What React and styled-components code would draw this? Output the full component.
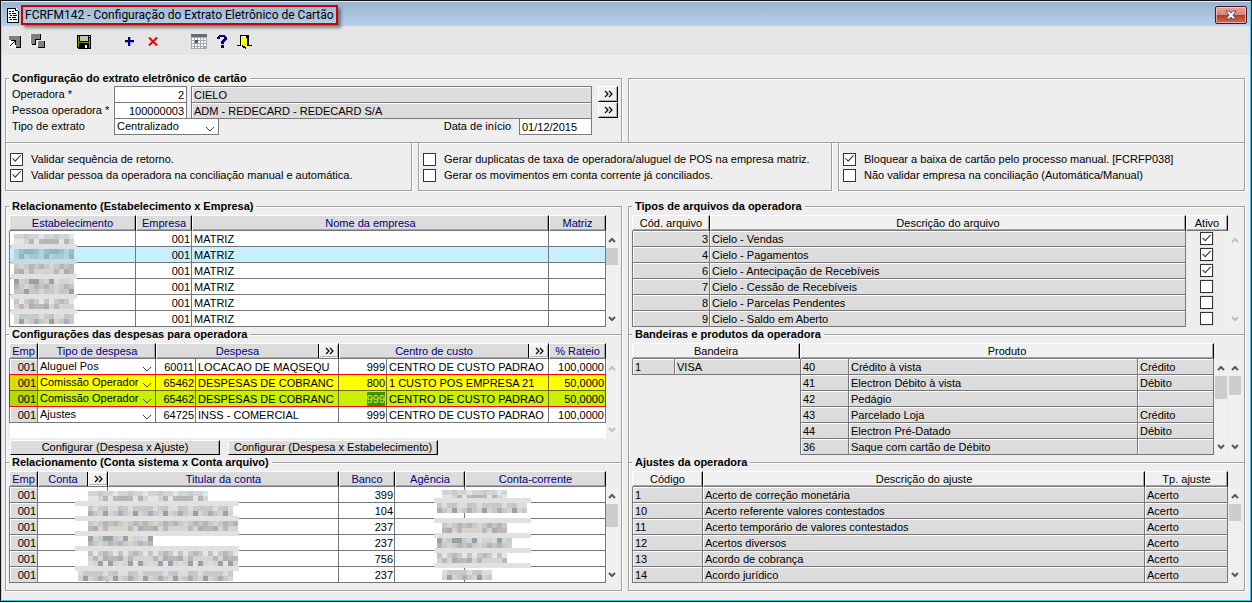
import styled, { createGlobalStyle, css } from "styled-components"

const GlobalStyle = createGlobalStyle`
    *, *::before, *::after {
        box-sizing: border-box;
    }
    body {
        margin: 0;
        background: #ffffff;
        color: #000000;
        font: 11px/15px "Liberation Sans", Arial, sans-serif;
    }
    button, input, select {
        margin: 0;
        padding: 0;
        color: inherit;
        font: inherit;
    }
`

const Window = styled.main`
    background: #eeeeee;
    border: solid #101018;
    border-width: 1px;
    box-shadow: inset 1px 0 0 #b9d1ea, inset -1px -1px 0 #35c8e8;
    padding: 0 1px 1px;
`
const TitleBar = styled.header`
    display: flex;
    align-items: center;
    gap: 1px;
    height: 25px;
    padding: 2px 3px 0 5px;
    border-top: 1px solid #e8f0f8;
    background: linear-gradient(#9ab3d1, #b7d0ea);
`
const Title = styled.h1`
    margin: 0;
    padding: 0 2px;
    border: 2px solid #cc0000;
    box-shadow: 3px 3px 3px rgba(0, 0, 0, 0.4);
    font: 12px/16px Roboto, "Open Sans", sans-serif;
    white-space: nowrap;
`
const CloseButton = styled.button`
    display: flex;
    align-items: center;
    justify-content: center;
    width: 32px;
    height: 18px;
    margin-left: auto;
    border: 1px solid #4a1420;
    border-radius: 2px;
    background: linear-gradient(#e8a79c, #d98477 48%, #b83a22 50%, #cf6a50);
    box-shadow: inset 0 0 0 1px rgba(255, 220, 210, 0.6);
`
const Toolbar = styled.nav`
    display: flex;
    gap: 23px;
    height: 29px;
    padding: 4px 1px;
    background: #e5e5e5;
`
const ToolGroup = styled.div`
    display: flex;
`
const ToolButton = styled.button`
    display: flex;
    align-items: center;
    justify-content: center;
    width: 23px;
    height: 23px;
    border: 0;
    background: none;
`
const Content = styled.div`
    padding: 17px 5px 9px 3px;
`
const Columns = styled.div`
    display: grid;
    grid-template-columns: repeat(2, minmax(0, 1fr));
    gap: 6px;
`
const CheckColumns = styled.div`
    display: grid;
    grid-template-columns: 407fr 414fr 407fr;
    gap: 6px;
    margin: -1px 0 9px;
`
const Stack = styled.div`
    min-width: 0;
`
const Group = styled.fieldset`
    min-width: 0;
    margin: 0;
    padding: 2px 3px 7px;
    border: 1px solid #a0a0a0;
    box-shadow: 1px 1px 0 #ffffff, inset 1px 1px 0 #ffffff;

    ${Stack} > &:not(:last-child) {
        margin-bottom: -6px;
        border-bottom: 0;
        box-shadow: 1px 0 0 #ffffff, inset 1px 1px 0 #ffffff;
    }
`
const Legend = styled.legend`
    padding: 0 3px;
    background: #eeeeee;
    font-weight: bold;
    line-height: 13px;
`
const HeadGroup = styled(Group)`
    padding-top: 1px;
    padding-bottom: 8px;
`
const BlankGroup = styled(Group)`
    margin-top: 6px;
`
const CheckGroup = styled(Group)`
    padding: 8px 4px 7px;
`
const Field = styled.div`
    display: flex;
    align-items: flex-start;
    height: 16px;
`
const FieldLabel = styled.label`
    width: ${(p) => (p.$inline ? "auto" : "105px")};
    margin-left: ${(p) => (p.$inline ? "auto" : "0")};
    padding: 0 ${(p) => (p.$inline ? "8px" : "0")} 0 3px;
    line-height: 16px;
`
const TextInput = styled.input`
    flex: ${(p) => (p.$grow ? "1" : "none")};
    min-width: 0;
    width: 73px;
    height: 17px;
    padding: 1px 2px 0;
    border: 1px solid #7a7a7a;
    border-radius: 0;
    background: ${(p) => (p.readOnly ? "#dcdcdc" : "#ffffff")};
    box-shadow: ${(p) => (p.readOnly ? "inset 1px 1px 0 #ffffff" : "none")};
    text-align: ${(p) => p.$align || "left"};
    margin-right: ${(p) => p.$gap || 0}px;
`
const SelectBox = styled.span`
    position: relative;
    display: flex;
    width: ${(p) => (p.$framed ? "105px" : "100%")};
    height: ${(p) => (p.$framed ? "17px" : "15px")};
    border: ${(p) => (p.$framed ? "1px solid #7a7a7a" : "0")};
    background: ${(p) => (p.$framed ? "#ffffff" : "none")};

    select {
        flex: 1;
        min-width: 0;
        padding: 0 14px 2px 2px;
        border: 0;
        appearance: none;
        background: none;
    }
    svg {
        position: absolute;
        right: 3px;
        bottom: 2px;
        pointer-events: none;
    }
`
const MoreButton = styled.button`
    display: flex;
    flex: none;
    align-items: center;
    justify-content: center;
    width: 20px;
    height: ${(p) => (p.$inHead ? "15px" : "16px")};
    border: solid;
    border-width: 1px;
    border-color: #ffffff #000000 ${(p) => (p.$inHead ? "#f0f0f0" : "#000000")} #ffffff;
    background: #f0f0f0;
    box-shadow: inset -1px -1px 0 #b4b4b4;
`
const CheckLabel = styled.label`
    display: flex;
    align-items: center;
    gap: 8px;
    height: 16px;
    white-space: nowrap;
`
const Checkbox = styled.input`
    display: block;
    flex: none;
    width: 13px;
    height: 13px;
    border: 1px solid #333333;
    border-radius: 0;
    appearance: none;
    background: #ffffff;

    &:checked::after {
        content: "";
        display: block;
        height: 11px;
        background: #3c3c3c;
        clip-path: polygon(9% 46%, 16% 40%, 38% 62%, 84% 14%, 91% 21%, 38% 78%);
    }
`
const GridBox = styled.div`
    position: relative;
    display: flex;
`
const Table = styled.table`
    flex: 1;
    align-self: flex-start;
    width: 0;
    min-width: 0;
    border-spacing: 0;
    table-layout: fixed;
    color: #000000;
`
const Col = styled.col`
    width: ${(p) => (p.$w ? p.$w + "px" : "auto")};
`
const Th = styled.th`
    height: 16px;
    padding: 0;
    border: solid;
    border-width: 1px;
    border-color: #ffffff #000000 #777777 #ffffff;
    background: ${(p) => (p.$light ? "#f0f0f0" : "#dcdcdc")};
    box-shadow: inset -1px -1px 0 #a6a6a6;
    color: ${(p) => (p.$light ? "#000000" : "#000080")};
    font-weight: normal;
    line-height: 14px;
    white-space: nowrap;
`
const HeadSplit = styled.span`
    display: flex;
    height: 14px;

    span {
        flex: 1;
        border-right: 1px solid #000000;
    }
    ${MoreButton} {
        height: 14px;
        border-right: 0;
        width: 19px;
    }
`
const Td = styled.td`
    height: 16px;
    padding: 1px 2px 0;
    overflow: hidden;
    border: solid #777777;
    border-width: 0 1px 1px 0;
    background: ${(p) => (p.$gray ? "#dcdcdc" : "transparent")};
    box-shadow: ${(p) => (p.$gray ? "inset 1px 1px 0 #ffffff" : "none")};
    line-height: 14px;
    text-align: ${(p) => (p.$num ? "right" : "left")};
    white-space: nowrap;

    &:first-child {
        border-left-width: 1px;
    }
    ${(p) => p.$num && css`
        padding-right: 1px;
    `}
    ${(p) => p.$flush && css`
        padding: 0;
    `}
    ${(p) => p.$bare && css`
        padding: 0 0 0 14px;
        border-color: transparent;
    `}
`
const Tr = styled.tr`
    background: ${(p) => p.$tone || "#ffffff"};

    ${(p) => p.$marked && css`
        ${Td} {
            border-color: #6b6b00;
            box-shadow: none;
        }
        ${Td}:first-child {
            border-left-color: #ff0000;
            background: ${p.$marked === "first" ? "#dcdc00" : "#b4d800"};
        }
        ${Td}:last-child {
            border-right-color: #ff0000;
        }
    `}
    ${(p) => p.$redLine && css`
        ${Td} {
            border-bottom-color: #ff0000;
        }
    `}
`
const Picked = styled.span`
    display: inline-block;
    background: #3c9600;
    color: #d2f050;
`
const ActiveCell = styled.span`
    display: block;
    width: 14px;
    height: 15px;
    padding-top: 1px;
    background: #dcdcdc;
`
const Filler = styled.div`
    height: 15px;
    margin: 0 12px 2px 1px;
    background: #ffffff;
`
const BarTrack = styled.div`
    display: flex;
    flex: none;
    flex-direction: column;
    width: 12px;
    margin: 16px 0 ${(p) => (p.$over ? "-15px" : "0")} ${(p) => (p.$gap || 0)}px;
    background: #f0f0f0;
    color: ${(p) => (p.$off ? "#bfbfbf" : "#5a5a5a")};
`
const BarArrow = styled.button`
    display: flex;
    align-items: center;
    justify-content: center;
    width: 12px;
    height: 17px;
    border: 0;
    background: none;

    &:last-child {
        margin-top: auto;
    }
`
const BarThumb = styled.div`
    height: ${(p) => p.$size}px;
    background: #cdcdcd;
`
const Actions = styled.div`
    display: flex;
    gap: 8px;
    padding-left: 1px;
`
const ActionButton = styled.button`
    width: 210px;
    height: 15px;
    border: solid;
    border-width: 1px;
    border-color: #ffffff #000000 #000000 #ffffff;
    background: #dcdcdc;
    box-shadow: inset -1px 0 0 #a0a0a0;
    line-height: 13px;
`
const MosaicArt = styled.svg`
    position: absolute;
    left: ${(p) => p.$x}px;
    top: ${(p) => p.$y}px;
`
const Flags = styled.div`
    flex: none;
    display: flex;
    width: 168px;

    ${Td}:last-child {
        border-right-width: 0;
    }
`
const Products = styled.div`
    flex: 1;
    display: flex;
    min-width: 0;
`

const DocIcon = () => (
    <svg width="13" height="17" viewBox="0 0 13 17" shapeRendering="crispEdges">
        <path d="M1 1h8l3 3v12H1z" fill="#fff" />
        <path d="M1 1h8v1H1zM0 1h1v15H0zM11 4h1v12h-1zM0 15h12v1H0zM8 1h1v3H8zM9 3h2v1H9z" fill="#000" />
        <path d="M2 4h2v1H2zM5 4h2v1H5zM2 6h2v1H2zM5 6h4v1H5zM3 8h2v1H3zM6 8h4v1H6zM2 10h2v1H2zM5 10h4v1H5zM3 12h2v1H3zM6 12h4v1H6z" fill="#000" />
    </svg>
)
const Chevrons = () => (
    <svg width="9" height="8" viewBox="0 0 9 8" fill="none" stroke="#000" strokeWidth="1.2">
        <path d="M1 1l3 3-3 3M5 1l3 3-3 3" />
    </svg>
)
const DropArrow = () => (
    <svg width="10" height="6" viewBox="0 0 10 6" fill="none" stroke="#444">
        <path d="M1 1l4 4 4-4" />
    </svg>
)
const ScrollMark = ({ down }) => (
    <svg width="8" height="6" viewBox="0 0 8 6" fill="none" stroke="currentColor" strokeWidth="2">
        <path d={down ? "M1 1l3 3 3-3" : "M1 5l3-3 3 3"} />
    </svg>
)
const CloseMark = () => (
    <svg width="12" height="10" viewBox="0 0 12 10">
        <path d="M1 1h3.4L6 3l1.600-2H11L7.900 5 11 9H7.600L6 7 4.400 9H1l3.100-4z" fill="#fff" stroke="#4b5068" />
    </svg>
)

const toolGroups = [
    [
        ["Restaurar", <svg key="i" width="12" height="12" viewBox="0 0 12 12" shapeRendering="crispEdges">
            <path d="M0 0h11v11H7v-2H2V5H0z" fill="#808080" />
            <path d="M11 0h1v12H7v-1h4z" fill="#000" />
            <path d="M0 4h7v8H0z" fill="#fff" />
            <path d="M2 4h5v5H6V6H5v1H4v1H3v1H2v1H1V9h1V8h1V7h1V6h1V5H2z" fill="#000" />
        </svg>],
        ["Janelas", <svg key="i" width="16" height="15" viewBox="0 0 16 15" shapeRendering="crispEdges">
            <path d="M1 0h9v6H5v4H1z" fill="#808080" />
            <path d="M10 0h1v6H6v5H2v-1h3V5h5z" fill="#000" />
            <path d="M8 7h6v6H8z" fill="#808080" />
            <path d="M14 7h1v7H8v-1h6z" fill="#000" />
            <path d="M7 7h1v6H7zM0 0h1v10H0z" fill="#fff" />
        </svg>],
    ],
    [
        ["Salvar", <svg key="i" width="14" height="14" viewBox="0 0 14 14" shapeRendering="crispEdges">
            <path d="M0 0h14v14H1l-1-1z" fill="#000" />
            <path d="M1 1h1v11H1zM12 3h1v10h-1zM2 7h10v1H2z" fill="#8c8c00" />
            <path d="M3 1h8v5H3z" fill="#c0c0c0" />
            <path d="M12 1h1v1h-1zM8 10h2v3H8z" fill="#fff" />
        </svg>],
    ],
    [
        ["Incluir", <svg key="i" width="9" height="9" viewBox="0 0 9 9" shapeRendering="crispEdges">
            <path d="M3 0h3v3h3v3H6v3H3V6H0V3h3z" fill="#9aa0c8" />
            <path d="M3 0h2v3h4v2H5v4H3V5H0V3h3z" fill="#000080" />
        </svg>],
        ["Excluir", <svg key="i" width="10" height="9" viewBox="0 0 10 9">
            <path d="M1 0.500l8 8M9 0.500l-8 8" stroke="#f00000" strokeWidth="2" />
        </svg>],
    ],
    [
        ["Calendário", <svg key="i" width="16" height="15" viewBox="0 0 16 15" shapeRendering="crispEdges">
            <path d="M0 0h16v15H0z" fill="#a8a8a8" />
            <path d="M0 0h16v3H0z" fill="#6c6c6c" />
            <path d="M1 4h2v2H1zM4 4h2v2H4zM7 4h2v2H7zM10 4h2v2h-2zM13 4h2v2h-2zM1 7h2v2H1zM7 7h2v2H7zM10 7h2v2h-2zM13 7h2v2h-2zM1 10h2v2H1zM4 10h2v2H4zM7 10h2v2H7zM10 10h2v2h-2zM13 10h2v2h-2zM1 13h2v1H1zM4 13h2v1H4zM7 13h2v1H7zM10 13h2v1h-2z" fill="#fff" />
            <path d="M4 6h3v3H4z" fill="#0a6a9a" />
        </svg>],
        ["Ajuda", <svg key="i" width="10" height="13" viewBox="0 0 10 13" shapeRendering="crispEdges">
            <path d="M2 0h6v1h1v1h1v3H9v1H8v1H7v2H4V6h1V5h1V4h1V2H3v2H0V2h1V1h1zM4 10h3v3H4z" fill="#000080" />
        </svg>],
        ["Sair", <svg key="i" width="15" height="14" viewBox="0 0 15 14" shapeRendering="crispEdges">
            <path d="M3 0h9v10h3v1h-4V1H4v10H0v-1h3z" fill="#000" />
            <path d="M5 1h6v10H9v3H8v-1H6v-1H5z" fill="#000" />
            <path d="M5 1h4v1H5z" fill="#fff" />
            <path d="M5 2h4v1h1v9H8v-1H6v-1H5z" fill="#ffff00" />
        </svg>],
    ],
]

const grays = ["#d4d4d2", "#c6c8ca", "#b4b6b4", "#cfd4d6", "#bdb8b2", "#dcdcdc", "#a9aeb8", "#c9c2c4", "#e2e6ea", "#9c9fa4", "#d8d3cc", "#c3cccb"]
const blues = ["#a4c8d6", "#8fb6c4", "#b0d4de", "#9cbfc8", "#7fa5b8"]

// blocks: [x, y, width, height, blue?]
function Mosaic({ x, y, width, height, blocks, bandY, blueBand }) {
    const cells = []
    blocks.forEach(([bx, by, bw, bh, blue], n) => {
        const tones = blue ? blues : grays
        for (let r = 0; r < bh / 5; r++) {
            for (let c = 0; c < bw / 5; c++) {
                const pick = ((c + 3) * (c + 7 * n + 5) + r * 5 + c * r * 3 + n) % tones.length
                cells.push(<rect key={`${n}-${r}-${c}`} x={bx + c * 5} y={by + r * 5} width="5" height="5" fill={tones[pick]} />)
            }
        }
    })
    return (
        <MosaicArt $x={x} $y={y} width={width} height={height} shapeRendering="crispEdges" aria-hidden="true">
            {cells}
            {bandY.map((by, i) => (
                <rect key={by} x="0" y={by} width={width} height="5" fill={i === blueBand ? "#c4dce2" : "#e1e1e1"} />
            ))}
        </MosaicArt>
    )
}

function ScrollBar({ thumb, gap, over }) {
    return (
        <BarTrack $off={!thumb} $gap={gap} $over={over}>
            <BarArrow aria-label="Rolar para cima"><ScrollMark /></BarArrow>
            {thumb && <BarThumb $size={thumb} />}
            <BarArrow aria-label="Rolar para baixo"><ScrollMark down /></BarArrow>
        </BarTrack>
    )
}

const Cols = ({ widths }) => (
    <colgroup>
        {widths.map((w, i) => <Col key={i} $w={w} />)}
    </colgroup>
)

const HeadMore = ({ children }) => (
    <HeadSplit>
        <span>{children}</span>
        <MoreButton $inHead aria-label={`Pesquisar ${children}`}><Chevrons /></MoreButton>
    </HeadSplit>
)

const Check = ({ children, checked }) => (
    <CheckLabel>
        <Checkbox type="checkbox" defaultChecked={checked} />
        {children}
    </CheckLabel>
)

const expenses = [
    { type: "Aluguel Pos", code: "60011", name: "LOCACAO DE MAQSEQU", center: "999", centerName: "CENTRO DE CUSTO PADRAO", rate: "100,0000", redLine: true },
    { type: "Comissão Operador", code: "65462", name: "DESPESAS DE COBRANC", center: "800", centerName: "1 CUSTO POS EMPRESA 21", rate: "50,0000", tone: "#ffff00", marked: "first" },
    { type: "Comissão Operador", code: "65462", name: "DESPESAS DE COBRANC", center: "999", centerName: "CENTRO DE CUSTO PADRAO", rate: "50,0000", tone: "#c8f000", marked: "second", redLine: true },
    { type: "Ajustes", code: "64725", name: "INSS - COMERCIAL", center: "999", centerName: "CENTRO DE CUSTO PADRAO", rate: "100,0000" },
]
const banks = ["399", "104", "237", "237", "756", "237"]
const files = [
    ["3", "Cielo - Vendas", true],
    ["4", "Cielo - Pagamentos", true],
    ["6", "Cielo - Antecipação de Recebíveis", true],
    ["7", "Cielo - Cessão de Recebíveis", false],
    ["8", "Cielo - Parcelas Pendentes", false],
    ["9", "Cielo - Saldo em Aberto", false],
]
const products = [
    ["40", "Crédito à vista", "Crédito"],
    ["41", "Electron Débito à vista", "Débito"],
    ["42", "Pedágio", ""],
    ["43", "Parcelado Loja", "Crédito"],
    ["44", "Electron Pré-Datado", "Débito"],
    ["36", "Saque com cartão de Débito", ""],
]
const adjusts = [
    ["1", "Acerto de correção monetária"],
    ["10", "Acerto referente valores contestados"],
    ["11", "Acerto temporário de valores contestados"],
    ["12", "Acertos diversos"],
    ["13", "Acordo de cobrança"],
    ["14", "Acordo jurídico"],
]

function OperatorGroup() {
    return (
        <HeadGroup>
            <Legend>Configuração do extrato eletrônico de cartão</Legend>
            <Field>
                <FieldLabel htmlFor="operadora">Operadora *</FieldLabel>
                <TextInput id="operadora" defaultValue="2" $align="right" $gap={4} />
                <TextInput readOnly $grow value="CIELO" aria-label="Nome da operadora" $gap={6} />
                <MoreButton aria-label="Pesquisar operadora"><Chevrons /></MoreButton>
            </Field>
            <Field>
                <FieldLabel htmlFor="pessoa">Pessoa operadora *</FieldLabel>
                <TextInput id="pessoa" defaultValue="100000003" $align="right" $gap={4} />
                <TextInput readOnly $grow value="ADM - REDECARD - REDECARD S/A" aria-label="Nome da pessoa" $gap={6} />
                <MoreButton aria-label="Pesquisar pessoa"><Chevrons /></MoreButton>
            </Field>
            <Field>
                <FieldLabel htmlFor="tipo">Tipo de extrato</FieldLabel>
                <SelectBox $framed>
                    <select id="tipo"><option>Centralizado</option></select>
                    <DropArrow />
                </SelectBox>
                <FieldLabel htmlFor="inicio" $inline>Data de início</FieldLabel>
                <TextInput id="inicio" defaultValue="01/12/2015" $gap={26} />
            </Field>
        </HeadGroup>
    )
}

function CompanyGroup() {
    return (
        <Group>
            <Legend>Relacionamento (Estabelecimento x Empresa)</Legend>
            <GridBox>
                <Table>
                    <Cols widths={[127, 56, 0, 57]} />
                    <thead>
                        <tr><Th>Estabelecimento</Th><Th>Empresa</Th><Th>Nome da empresa</Th><Th>Matriz</Th></tr>
                    </thead>
                    <tbody>
                        {[0, 1, 2, 3, 4, 5].map((n) => (
                            <Tr key={n} $tone={n === 1 ? "#c8efff" : undefined}>
                                <Td /><Td $num>001</Td><Td>MATRIZ</Td><Td />
                            </Tr>
                        ))}
                    </tbody>
                </Table>
                <ScrollBar thumb={17} />
                <Mosaic x={2} y={19} width={66} height={90} bandY={[10, 25, 40, 60, 75]} blueBand={1}
                    blocks={[[3, 0, 60, 10], [3, 15, 60, 10, true], [3, 30, 60, 10], [3, 45, 60, 15], [3, 65, 60, 10], [3, 80, 60, 10]]} />
            </GridBox>
        </Group>
    )
}

function ExpenseGroup() {
    return (
        <Group>
            <Legend>Configurações das despesas para operadora</Legend>
            <GridBox>
                <Table>
                    <Cols widths={[29, 118, 40, 0, 48, 162, 57]} />
                    <thead>
                        <tr>
                            <Th>Emp</Th>
                            <Th>Tipo de despesa</Th>
                            <Th colSpan={2}><HeadMore>Despesa</HeadMore></Th>
                            <Th colSpan={2}><HeadMore>Centro de custo</HeadMore></Th>
                            <Th>% Rateio</Th>
                        </tr>
                    </thead>
                    <tbody>
                        {expenses.map((e, i) => (
                            <Tr key={i} $tone={e.tone} $marked={e.marked} $redLine={e.redLine}>
                                <Td $num $gray>001</Td>
                                <Td $flush>
                                    <SelectBox>
                                        <select aria-label="Tipo de despesa"><option>{e.type}</option></select>
                                        <DropArrow />
                                    </SelectBox>
                                </Td>
                                <Td $num>{e.code}</Td>
                                <Td>{e.name}</Td>
                                <Td $num>{e.marked === "second" ? <Picked>{e.center}</Picked> : e.center}</Td>
                                <Td>{e.centerName}</Td>
                                <Td $num>{e.rate}</Td>
                            </Tr>
                        ))}
                    </tbody>
                </Table>
                <ScrollBar over />
            </GridBox>
            <Filler />
            <Actions>
                <ActionButton>Configurar (Despesa x Ajuste)</ActionButton>
                <ActionButton>Configurar (Despesa x Estabelecimento)</ActionButton>
            </Actions>
        </Group>
    )
}

function AccountGroup() {
    return (
        <Group>
            <Legend>Relacionamento (Conta sistema x Conta arquivo)</Legend>
            <GridBox>
                <Table>
                    <Cols widths={[29, 70, 0, 56, 70, 141]} />
                    <thead>
                        <tr>
                            <Th>Emp</Th><Th><HeadMore>Conta</HeadMore></Th><Th>Titular da conta</Th>
                            <Th>Banco</Th><Th>Agência</Th><Th>Conta-corrente</Th>
                        </tr>
                    </thead>
                    <tbody>
                        {banks.map((bank, i) => (
                            <Tr key={i}>
                                <Td $num $gray>001</Td><Td /><Td /><Td $num>{bank}</Td><Td /><Td />
                            </Tr>
                        ))}
                    </tbody>
                </Table>
                <ScrollBar thumb={23} />
                <Mosaic x={66} y={20} width={164} height={90} bandY={[10, 25, 40, 55, 75]}
                    blocks={[[13, 0, 120, 10], [13, 15, 145, 10], [13, 30, 150, 10], [13, 45, 65, 10], [13, 60, 150, 15], [3, 80, 155, 10]]} />
                <Mosaic x={425} y={19} width={97} height={91} bandY={[8, 28, 43, 58, 73]}
                    blocks={[[8, 0, 65, 10], [3, 13, 90, 10], [8, 33, 65, 10], [3, 48, 75, 10], [3, 63, 70, 10], [8, 80, 50, 10]]} />
            </GridBox>
        </Group>
    )
}

function FilesGroup() {
    return (
        <Group>
            <Legend>Tipos de arquivos da operadora</Legend>
            <GridBox>
                <Table>
                    <Cols widths={[78, 0, 42]} />
                    <thead>
                        <tr><Th $light>Cód. arquivo</Th><Th $light>Descrição do arquivo</Th><Th $light>Ativo</Th></tr>
                    </thead>
                    <tbody>
                        {files.map(([code, name, on]) => (
                            <Tr key={code} $tone="transparent">
                                <Td $num $gray>{code}</Td>
                                <Td $gray>{name}</Td>
                                <Td $bare>
                                    <ActiveCell><Checkbox type="checkbox" defaultChecked={on} aria-label={`Ativo: ${name}`} /></ActiveCell>
                                </Td>
                            </Tr>
                        ))}
                    </tbody>
                </Table>
                <ScrollBar gap={1} />
            </GridBox>
        </Group>
    )
}

function ProductsGroup() {
    return (
        <Group>
            <Legend>Bandeiras e produtos da operadora</Legend>
            <GridBox>
                <Flags>
                    <Table>
                        <Cols widths={[43, 0]} />
                        <thead><tr><Th $light colSpan={2}>Bandeira</Th></tr></thead>
                        <tbody><Tr><Td $gray>1</Td><Td $gray>VISA</Td></Tr></tbody>
                    </Table>
                </Flags>
                <Products>
                    <Table>
                        <Cols widths={[49, 0, 76]} />
                        <thead><tr><Th $light colSpan={3}>Produto</Th></tr></thead>
                        <tbody>
                            {products.map(([code, name, kind]) => (
                                <Tr key={code}><Td $gray>{code}</Td><Td $gray>{name}</Td><Td $gray>{kind}</Td></Tr>
                            ))}
                        </tbody>
                    </Table>
                </Products>
                <ScrollBar thumb={23} gap={1} />
                <ScrollBar thumb={19} gap={2} />
            </GridBox>
        </Group>
    )
}

function AdjustGroup() {
    return (
        <Group>
            <Legend>Ajustes da operadora</Legend>
            <GridBox>
                <Table>
                    <Cols widths={[71, 0, 83]} />
                    <thead>
                        <tr><Th $light>Código</Th><Th $light>Descrição do ajuste</Th><Th $light>Tp. ajuste</Th></tr>
                    </thead>
                    <tbody>
                        {adjusts.map(([code, name]) => (
                            <Tr key={code}><Td $gray>{code}</Td><Td $gray>{name}</Td><Td $gray>Acerto</Td></Tr>
                        ))}
                    </tbody>
                </Table>
                <ScrollBar thumb={17} gap={1} />
            </GridBox>
        </Group>
    )
}

export default function App() {
    return (
        <Window>
            <GlobalStyle />
            <TitleBar>
                <DocIcon />
                <Title>FCRFM142 - Configuração do Extrato Eletrônico de Cartão</Title>
                <CloseButton aria-label="Fechar"><CloseMark /></CloseButton>
            </TitleBar>
            <Toolbar>
                {toolGroups.map((group, i) => (
                    <ToolGroup key={i}>
                        {group.map(([label, icon]) => <ToolButton key={label} aria-label={label}>{icon}</ToolButton>)}
                    </ToolGroup>
                ))}
            </Toolbar>
            <Content>
                <Columns>
                    <OperatorGroup />
                    <BlankGroup as="div" />
                </Columns>
                <CheckColumns>
                    <CheckGroup as="div">
                        <Check checked>Validar sequência de retorno.</Check>
                        <Check checked>Validar pessoa da operadora na conciliação manual e automática.</Check>
                    </CheckGroup>
                    <CheckGroup as="div">
                        <Check>Gerar duplicatas de taxa de operadora/aluguel de POS na empresa matriz.</Check>
                        <Check>Gerar os movimentos em conta corrente já conciliados.</Check>
                    </CheckGroup>
                    <CheckGroup as="div">
                        <Check checked>Bloquear a baixa de cartão pelo processo manual. [FCRFP038]</Check>
                        <Check>Não validar empresa na conciliação (Automática/Manual)</Check>
                    </CheckGroup>
                </CheckColumns>
                <Columns>
                    <Stack>
                        <CompanyGroup />
                        <ExpenseGroup />
                        <AccountGroup />
                    </Stack>
                    <Stack>
                        <FilesGroup />
                        <ProductsGroup />
                        <AdjustGroup />
                    </Stack>
                </Columns>
            </Content>
        </Window>
    )
}
